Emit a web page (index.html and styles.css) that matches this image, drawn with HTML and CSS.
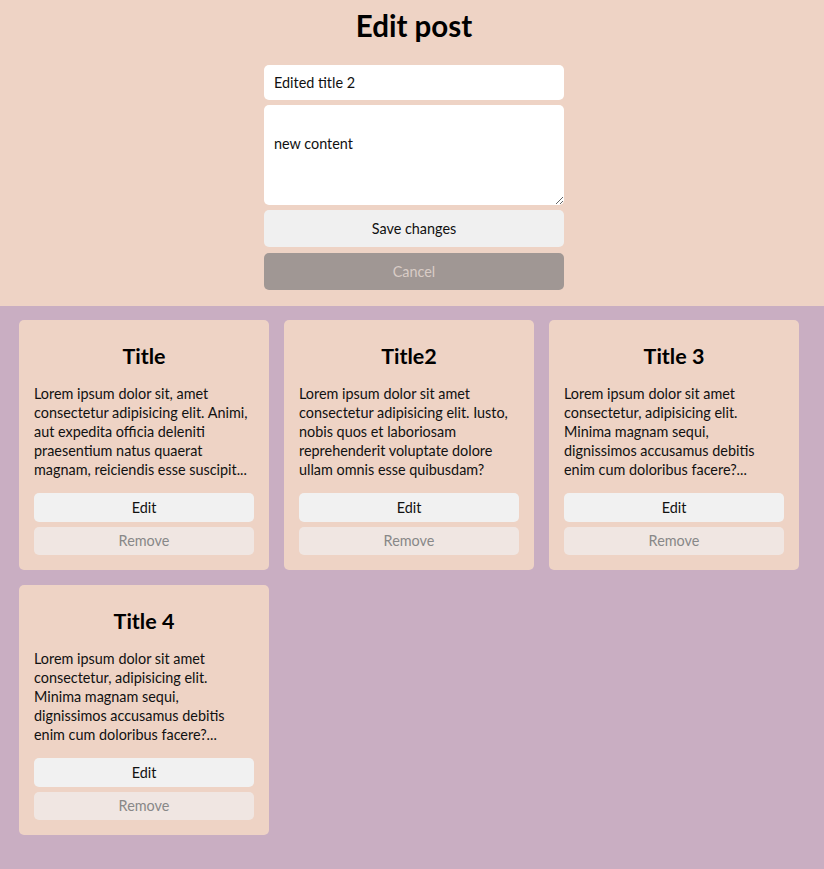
FILE: index.html
```html
<!DOCTYPE html>
<html lang="en">
<head>
<meta charset="utf-8">
<title>Edit post</title>
<link rel="stylesheet" href="styles.css">
</head>
<body>
<section class="editor">
  <h1 class="editor-title">Edit post</h1>
  <form class="editor-form">
    <input class="field" type="text" value="Edited title 2">
    <textarea class="field area">new content</textarea>
    <button class="btn save" type="button">Save changes</button>
    <button class="btn cancel" type="button">Cancel</button>
  </form>
</section>
<main class="posts">
  <article class="card">
    <h2 class="card-title">Title</h2>
    <p class="card-text">Lorem ipsum dolor sit, amet consectetur adipisicing elit. Animi, aut expedita officia deleniti praesentium natus quaerat magnam, reiciendis esse suscipit...</p>
    <button class="btn small edit" type="button">Edit</button>
    <button class="btn small remove" type="button">Remove</button>
  </article>
  <article class="card">
    <h2 class="card-title">Title2</h2>
    <p class="card-text">Lorem ipsum dolor sit amet consectetur adipisicing elit. Iusto, nobis quos et laboriosam reprehenderit voluptate dolore ullam omnis esse quibusdam?</p>
    <button class="btn small edit" type="button">Edit</button>
    <button class="btn small remove" type="button">Remove</button>
  </article>
  <article class="card">
    <h2 class="card-title">Title 3</h2>
    <p class="card-text">Lorem ipsum dolor sit amet consectetur, adipisicing elit. Minima magnam sequi, dignissimos accusamus debitis enim cum doloribus facere?...</p>
    <button class="btn small edit" type="button">Edit</button>
    <button class="btn small remove" type="button">Remove</button>
  </article>
  <article class="card">
    <h2 class="card-title">Title 4</h2>
    <p class="card-text">Lorem ipsum dolor sit amet consectetur, adipisicing elit. Minima magnam sequi, dignissimos accusamus debitis enim cum doloribus facere?...</p>
    <button class="btn small edit" type="button">Edit</button>
    <button class="btn small remove" type="button">Remove</button>
  </article>
</main>
</body>
</html>
```
FILE: styles.css
```css
html, body {
  margin: 0;
  padding: 0;
}
body {
  font-family: Lato, "Open Sans", sans-serif;
  font-size: 14.4px;
  color: #111;
  background: #c9aec2;
  min-height: 869px;
}
.editor {
  background: #eed3c5;
  padding: 8px 0 16px 4px;
  display: flex;
  flex-direction: column;
  align-items: center;
}
.editor-title {
  margin: 0 0 21px;
  font-size: 29.5px;
  line-height: 36px;
  font-weight: 700;
  color: #000;
}
.editor-form {
  width: 300px;
  display: flex;
  flex-direction: column;
  gap: 5px;
}
.field {
  box-sizing: border-box;
  border: none;
  border-radius: 5px;
  background: #fff;
  font: inherit;
  color: #111;
  height: 35px;
  padding: 0 10px;
  outline: none;
}
.area {
  height: 100px;
  padding: 30px 10px 0;
  resize: vertical;
}
.btn {
  box-sizing: border-box;
  border: none;
  border-radius: 5px;
  font: inherit;
  cursor: pointer;
}
.save {
  height: 37px;
  background: #f0f0f0;
  color: #111;
}
.cancel {
  height: 37px;
  margin-top: 1px;
  background: #a09794;
  color: #d9ccc6;
}
.posts {
  padding: 14px 19px 34px;
  display: grid;
  grid-template-columns: repeat(3, 250px);
  gap: 15px;
}
.card {
  box-sizing: border-box;
  height: 250px;
  background: #eed3c5;
  border-radius: 5px;
  padding: 15px;
  display: flex;
  flex-direction: column;
}
.card-title {
  margin: 8px 0 15px;
  text-align: center;
  font-size: 21.5px;
  line-height: 26px;
  font-weight: 700;
  color: #000;
}
.card-text {
  margin: 0 0 14px;
  line-height: 19px;
  flex: 1;
}
.small {
  height: 29px;
}
.edit {
  background: #f1f1f1;
  color: #111;
}
.remove {
  margin-top: 5px;
  background: #f0e6e2;
  color: #888;
}
```
